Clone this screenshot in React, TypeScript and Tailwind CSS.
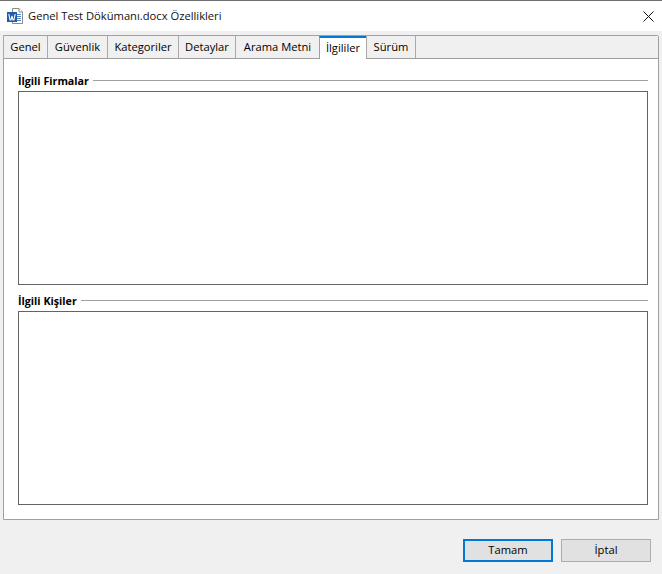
import React from "react";

const tabs = [
  { label: "Genel", w: "w-[45px]" },
  { label: "Güvenlik", w: "w-[61px]" },
  { label: "Kategoriler", w: "w-[72px]" },
  { label: "Detaylar", w: "w-[58px]" },
  { label: "Arama Metni", w: "w-[85px]" },
  { label: "İlgililer", w: "w-[48px]", active: true },
  { label: "Sürüm", w: "w-[50px]" },
];

function WordIcon() {
  return (
    <svg width="17" height="17" viewBox="0 0 17 17" className="block">
      <path d="M5.5 0.5H12L15.5 4V15.5H5.5Z" fill="#fff" stroke="#8a8a8a" />
      <path d="M12 0.5V4H15.5" fill="#fff" stroke="#8a8a8a" />
      <path d="M10 6.5H14M10 8.5H14M10 10.5H14M10 12.5H14" stroke="#4d82c3" />
      <rect x="0" y="4" width="10" height="10" fill="#1f5cab" />
      <path d="M1.8 6L3.1 12H4L5 8L6 12H6.9L8.2 6" fill="none" stroke="#fff" strokeWidth="1.1" />
    </svg>
  );
}

function Group({ title, h }: { title: string; h: string }) {
  return (
    <div className="flex flex-col">
      <div className="flex items-center h-[18px]">
        <span className="font-bold text-[10.7px] leading-[18px] text-black">{title}</span>
        <div className="flex-1 h-px bg-[#a0a0a0] ml-[4px] -translate-y-px" />
      </div>
      <div className={`mt-px bg-white border border-[#646464] ${h}`} />
    </div>
  );
}

export default function App() {
  return (
    <div
      className="w-[662px] h-[574px] flex flex-col bg-[#f0f0f0] text-black overflow-hidden border-t border-[#6f6f6f]"
      style={{ fontFamily: '"Open Sans", "Noto Sans", sans-serif' }}
    >
      <div className="h-[30px] bg-white flex items-center shrink-0 pl-[7px] pr-[8px]">
        <WordIcon />
        <span className="ml-[4px] text-[11.2px] leading-none text-[#111]">Genel Test Dökümanı.docx Özellikleri</span>
        <svg width="11" height="11" viewBox="0 0 11 11" className="ml-auto">
          <path d="M0.5 0.5L10.5 10.5M10.5 0.5L0.5 10.5" stroke="#111" strokeWidth="1" fill="none" />
        </svg>
      </div>
      <div className="flex-1 flex flex-col px-[3px] pt-[4px]">
        <div className="w-[656px] h-[485px] bg-white border border-[#a0a0a0] rounded-tr-[2px] flex flex-col">
          <div className="flex h-[23px] shrink-0 bg-[#f0f0f0] border-b border-[#a0a0a0] -ml-px">
            {tabs.map((t, i) =>
              t.active ? (
                <div
                  key={t.label}
                  className={`${t.w} h-[23px] -ml-px bg-white border-x border-[#a0a0a0] border-t-2 border-t-[#0078d7] flex items-center justify-center text-[11.2px]`}
                >
                  {t.label}
                </div>
              ) : (
                <div
                  key={t.label}
                  className={`${t.w} h-[22px] ${i === 0 ? "" : "-ml-px"} border-x border-[#a9a9a9] flex items-center justify-center text-[11.2px]`}
                >
                  {t.label}
                </div>
              )
            )}
          </div>
          <div className="flex flex-col gap-[7px] pt-[13px] pl-[14px] pr-[10px]">
            <Group title="İlgili Firmalar" h="h-[194px]" />
            <Group title="İlgili Kişiler" h="h-[194px]" />
          </div>
        </div>
        <div className="flex justify-end gap-[8px] mt-[19px] pr-[8px]">
          <button className="w-[90px] h-[23px] bg-[#e1e1e1] border-2 border-[#0078d7] text-[11.2px] flex items-center justify-center">Tamam</button>
          <button className="w-[90px] h-[23px] bg-[#e1e1e1] border border-[#adadad] text-[11.2px] flex items-center justify-center">İptal</button>
        </div>
      </div>
    </div>
  );
}
